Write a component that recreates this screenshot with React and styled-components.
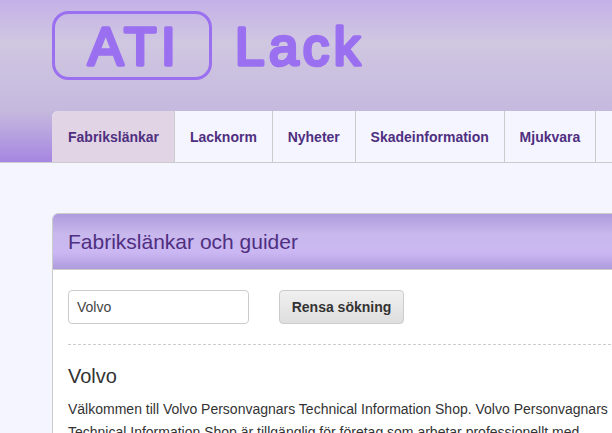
import React from "react";
import styled, { createGlobalStyle } from "styled-components";

const tabs = ["Fabrikslänkar", "Lacknorm", "Nyheter", "Skadeinformation", "Mjukvara"];

function Logo() {
	return (
		<LogoSvg width="320" height="72" viewBox="0 0 320 72">
			<rect x="1.5" y="1.5" width="157" height="66" rx="15" fill="none" stroke="#9a6ff0" strokeWidth="3" />
			<LogoText x="36" y="53.5" fontSize="53" letterSpacing="4.6">
				ATI
			</LogoText>
			<LogoText x="183" y="53.5" fontSize="53" letterSpacing="4.4">
				Lack
			</LogoText>
		</LogoSvg>
	);
}

export default function App() {
	return (
		<Page>
			<GlobalStyle />
			<Header>
				<LogoRow>
					<Logo />
				</LogoRow>
				<Nav>
					{tabs.map((tab, index) => (
						<Tab key={tab} $active={index === 0} href="/">
							{tab}
						</Tab>
					))}
					<Tab href="/" aria-label="Fler" />
				</Nav>
			</Header>
			<Main>
				<Panel>
					<PanelHeader>
						<PanelTitle>Fabrikslänkar och guider</PanelTitle>
					</PanelHeader>
					<PanelBody>
						<SearchRow>
							<SearchInput defaultValue="Volvo" />
							<ClearButton>Rensa sökning</ClearButton>
						</SearchRow>
						<Brand>Volvo</Brand>
						<Description>
							Välkommen till Volvo Personvagnars Technical Information Shop. Volvo Personvagnars
							<br />
							Technical Information Shop är tillgänglig för företag som arbetar professionellt med
						</Description>
					</PanelBody>
				</Panel>
			</Main>
		</Page>
	);
}

const GlobalStyle = createGlobalStyle`
	html, body {
		margin: 0;
		padding: 0;
		background: #f5f5ff;
		overflow: hidden;
	}
`;

const Page = styled.div`
	width: 612px;
	height: 433px;
	overflow: hidden;
	font-family: "Liberation Sans", Arial, sans-serif;
`;

const Header = styled.header`
	height: 163px;
	box-sizing: border-box;
	background: linear-gradient(to bottom, #c4b0e8 0, #d0c7e1 42px, #c5b9de 111px, #a686e2 162px);
	border-bottom: 1px solid #cccccc;
`;

const LogoRow = styled.div`
	height: 111px;
	box-sizing: border-box;
	padding: 11px 0 0 52px;
`;

const LogoSvg = styled.svg`
	display: block;
`;

const LogoText = styled.text`
	font-family: "Liberation Sans", Arial, sans-serif;
	font-weight: 400;
	fill: #9a6ff0;
	stroke: #9a6ff0;
	stroke-width: 3.5;
	stroke-linejoin: round;
	stroke-linecap: round;
`;

const Nav = styled.nav`
	display: flex;
	height: 51px;
	margin-left: 52px;
	width: 640px;
	background: #f5f5ff;
	border-radius: 6px 0 0 0;
	overflow: hidden;
`;

const Tab = styled.a`
	display: flex;
	align-items: center;
	box-sizing: content-box;
	padding: ${(props) => (props.$active ? "0 15px 0 16px" : "0 14.9px")};
	min-width: 20px;
	color: #4f2f80;
	font-size: 14px;
	font-weight: 700;
	text-decoration: none;
	border-right: 1px solid #cccccc;
	background: ${(props) => (props.$active ? "#e1d5e5" : "#f5f5ff")};
`;

const Main = styled.main`
	padding: 50px 0 0 52px;
`;

const Panel = styled.section`
	width: 640px;
	height: 240px;
	box-sizing: border-box;
	background: #ffffff;
	border: 1px solid #cccccc;
	border-radius: 6px 0 0 0;
	overflow: hidden;
`;

const PanelHeader = styled.div`
	height: 56px;
	box-sizing: border-box;
	display: flex;
	align-items: center;
	padding: 0 15px;
	background: linear-gradient(to bottom, #ae9bdd 0, #c8b8ec 20px, #cbb8f3 38px, #ae9bdd 100%);
	border-bottom: 1px solid #cccccc;
`;

const PanelTitle = styled.h2`
	margin: 0;
	color: #4f2f80;
	font-size: 21px;
	font-weight: 400;
`;

const PanelBody = styled.div`
	padding: 20px 15px 0;
`;

const SearchRow = styled.div`
	display: flex;
	gap: 30px;
	padding-bottom: 20px;
	border-bottom: 1px dashed #cccccc;
`;

const SearchInput = styled.input`
	width: 181px;
	height: 34px;
	box-sizing: border-box;
	padding: 0 8px;
	color: #444444;
	font-family: inherit;
	font-size: 14px;
	background: #ffffff;
	border: 1px solid #cccccc;
	border-radius: 4px;
`;

const ClearButton = styled.button`
	width: 125px;
	height: 34px;
	padding: 0;
	color: #333333;
	font-family: inherit;
	font-size: 14px;
	font-weight: 700;
	background: linear-gradient(to bottom, #f0f0f0, #dedede);
	border: 1px solid #cccccc;
	border-radius: 4px;
`;

const Brand = styled.h3`
	margin: 18px 0 0;
	color: #333333;
	font-size: 20px;
	line-height: 26px;
	font-weight: 400;
`;

const Description = styled.p`
	margin: 9px 0 0;
	color: #333333;
	font-size: 14px;
	line-height: 23px;
	white-space: nowrap;
`;
